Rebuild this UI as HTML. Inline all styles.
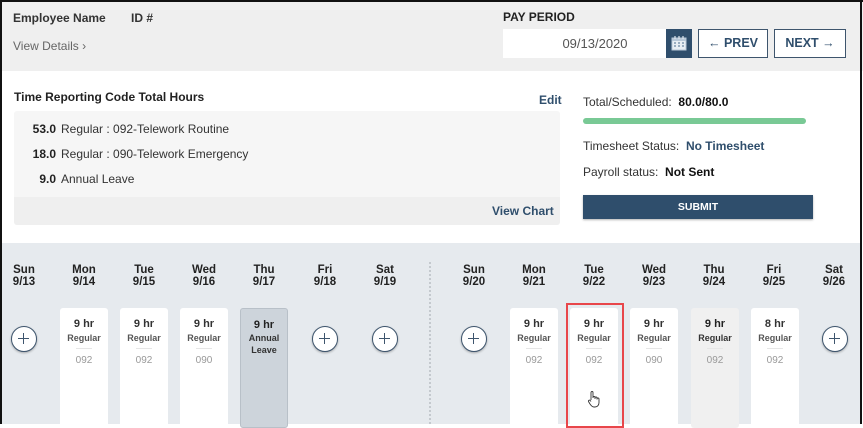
<!DOCTYPE html>
<html><head><meta charset="utf-8"><style>
*{margin:0;padding:0;box-sizing:border-box}
body{width:863px;height:424px;overflow:hidden;font-family:"Liberation Sans",sans-serif;background:#fff;position:relative;color:#222}
.a{position:absolute;white-space:nowrap}
.b{font-weight:bold}
.day{position:absolute;top:264px;width:50px;text-align:center;font-weight:bold;font-size:11.5px;line-height:12px;color:#222}
.card{position:absolute;top:308px;width:48px;height:120px;background:#fff;border-radius:3px;text-align:center}
.card .h{margin-top:10px;font-size:11px;font-weight:bold;color:#333}
.card .r{font-size:9px;font-weight:bold;color:#555;margin-top:3px}
.card .l{width:16px;height:1px;background:#e6e6e6;margin:5px auto 6px}
.card .c{font-size:10px;color:#999}
.plus{position:absolute;top:326px;width:26px;height:26px;border-radius:50%;background:#fff;border:1.5px solid #3e556d;box-shadow:0 1px 2px rgba(0,0,0,.3)}
.plus:before{content:"";position:absolute;left:6px;top:11px;width:11px;height:1.3px;background:#3e556d}
.plus:after{content:"";position:absolute;left:11px;top:6px;width:1.3px;height:11px;background:#3e556d}
</style></head><body>
<div class="a" style="left:0;top:0;width:863px;height:71px;background:#efefef"></div>
<div class="a" style="left:0;top:0;width:863px;height:2px;background:#111"></div>
<div class="a" style="left:0;top:0;width:2px;height:424px;background:#111"></div>
<div class="a" style="left:860px;top:0;width:2px;height:424px;background:#111"></div>
<div class="a b" style="left:13px;top:11px;font-size:12px;color:#333">Employee Name</div>
<div class="a b" style="left:131px;top:11px;font-size:12px;color:#333">ID #</div>
<div class="a" style="left:13px;top:39px;font-size:12px;color:#666">View Details &#x203A;</div>
<div class="a b" style="left:503px;top:10px;font-size:12px;color:#222">PAY PERIOD</div>
<div class="a" style="left:503px;top:29px;width:164px;height:29px;background:#fff;font-size:13px;color:#555;text-align:center;line-height:29px;padding-left:20px">09/13/2020</div>
<div class="a" style="left:666px;top:29px;width:26px;height:29px;background:#2f4e6c"></div>
<svg class="a" style="left:671px;top:36px" width="16" height="15" viewBox="0 0 16 15"><rect x="1" y="2" width="14" height="12" fill="#e8eef4" stroke="#b8c8d8"/><rect x="1" y="2" width="14" height="3" fill="#b8c8d8"/><path d="M4 0v3M8 0v3M12 0v3" stroke="#dfe7ef" stroke-width="1.2"/><path d="M3 7h2M7 7h2M11 7h2M3 10h2M7 10h2M11 10h2" stroke="#7f97ae" stroke-width="1.5"/></svg>
<div class="a" style="left:698px;top:29px;width:70px;height:29px;background:#fff;border:1px solid #3e556d;font-size:12.5px;font-weight:bold;color:#2f4e6c;line-height:27px;text-align:center">&#8592; PREV</div>
<div class="a" style="left:774px;top:29px;width:72px;height:29px;background:#fff;border:1px solid #3e556d;font-size:12.5px;font-weight:bold;color:#2f4e6c;line-height:27px;text-align:center">NEXT &#8594;</div>

<div class="a b" style="left:14px;top:90px;font-size:12px">Time Reporting Code Total Hours</div>
<div class="a b" style="left:539px;top:93px;font-size:12px;color:#2f4e6c">Edit</div>
<div class="a" style="left:14px;top:111px;width:546px;height:114px;background:#f6f6f6;border-radius:3px"></div>
<div class="a" style="left:14px;top:197px;width:546px;height:28px;background:#efefef;border-radius:0 0 3px 3px"></div>
<div class="a" style="left:0;top:122px;width:56px;text-align:right;font-size:12px;font-weight:bold">53.0</div>
<div class="a" style="left:61px;top:122px;font-size:12px;color:#333">Regular : 092-Telework Routine</div>
<div class="a" style="left:0;top:147px;width:56px;text-align:right;font-size:12px;font-weight:bold">18.0</div>
<div class="a" style="left:61px;top:147px;font-size:12px;color:#333">Regular : 090-Telework Emergency</div>
<div class="a" style="left:0;top:172px;width:56px;text-align:right;font-size:12px;font-weight:bold">9.0</div>
<div class="a" style="left:61px;top:172px;font-size:12px;color:#333">Annual Leave</div>
<div class="a b" style="left:492px;top:204px;font-size:12px;color:#2f4e6c">View Chart</div>

<div class="a" style="left:583px;top:95px;font-size:12px;color:#333">Total/Scheduled: &nbsp;<b style="color:#111">80.0/80.0</b></div>
<div class="a" style="left:583px;top:118px;width:223px;height:6px;background:#79c995;border-radius:3px"></div>
<div class="a" style="left:583px;top:139px;font-size:12px;color:#333">Timesheet Status: &nbsp;<b style="color:#2f4e6c">No Timesheet</b></div>
<div class="a" style="left:583px;top:165px;font-size:12px;color:#333">Payroll status: &nbsp;<b style="color:#111">Not Sent</b></div>
<div class="a b" style="left:583px;top:195px;width:230px;height:24px;background:#2f4e6c;color:#fff;font-size:10.5px;text-align:center;line-height:24px;box-shadow:0 1px 2px rgba(0,0,0,.3)">SUBMIT</div>

<div class="a" style="left:2px;top:243px;width:858px;height:181px;background:#e6eaee"></div>
<div class="a" style="left:429px;top:262px;width:0;height:162px;border-left:2px dotted #c4c9ce"></div>

<div class="day" style="left:-1px">Sun<br>9/13</div>
<div class="day" style="left:59px">Mon<br>9/14</div>
<div class="day" style="left:119px">Tue<br>9/15</div>
<div class="day" style="left:179px">Wed<br>9/16</div>
<div class="day" style="left:239px">Thu<br>9/17</div>
<div class="day" style="left:300px">Fri<br>9/18</div>
<div class="day" style="left:360px">Sat<br>9/19</div>
<div class="day" style="left:449px">Sun<br>9/20</div>
<div class="day" style="left:509px">Mon<br>9/21</div>
<div class="day" style="left:569px">Tue<br>9/22</div>
<div class="day" style="left:629px">Wed<br>9/23</div>
<div class="day" style="left:689px">Thu<br>9/24</div>
<div class="day" style="left:749px">Fri<br>9/25</div>
<div class="day" style="left:809px">Sat<br>9/26</div>

<div class="plus" style="left:11px"></div>
<div class="card" style="left:60px"><div class="h">9 hr</div><div class="r">Regular</div><div class="l"></div><div class="c">092</div></div>
<div class="card" style="left:120px"><div class="h">9 hr</div><div class="r">Regular</div><div class="l"></div><div class="c">092</div></div>
<div class="card" style="left:180px"><div class="h">9 hr</div><div class="r">Regular</div><div class="l"></div><div class="c">090</div></div>
<div class="card" style="left:240px;background:#cdd4db;border:1px solid #b8c0c8"><div class="h" style="color:#222">9 hr</div><div class="r" style="color:#333;line-height:12px;margin-top:1px">Annual<br>Leave</div></div>
<div class="plus" style="left:312px"></div>
<div class="plus" style="left:372px"></div>
<div class="plus" style="left:461px"></div>
<div class="card" style="left:510px"><div class="h">9 hr</div><div class="r">Regular</div><div class="l"></div><div class="c">092</div></div>
<div class="card" style="left:570px"><div class="h">9 hr</div><div class="r">Regular</div><div class="l"></div><div class="c">092</div></div>
<div class="card" style="left:630px"><div class="h">9 hr</div><div class="r">Regular</div><div class="l"></div><div class="c">090</div></div>
<div class="card" style="left:691px;background:#f0f0f0"><div class="h" style="color:#222">9 hr</div><div class="r" style="color:#333">Regular</div><div class="l"></div><div class="c">092</div></div>
<div class="card" style="left:751px"><div class="h">8 hr</div><div class="r">Regular</div><div class="l"></div><div class="c">092</div></div>
<div class="plus" style="left:822px"></div>
<div class="a" style="left:566px;top:303px;width:58px;height:125px;border:2px solid #e8464a"></div>
<svg class="a" style="left:587px;top:390px" width="14" height="18" viewBox="0 0 14 18"><path d="M4 10V2.5a1 1 0 0 1 2 0V8M6 7.5a1 1 0 0 1 2 0V9M8 8a1 1 0 0 1 2 0v1.5M10 9a1 1 0 0 1 2 0v3.5c0 2.5-1.5 4.5-4 4.5H7c-2 0-3-1.5-4-3L1.5 11.5a1 1 0 0 1 1.7-1L4 11.5" fill="#fff" stroke="#333" stroke-width="0.9"/></svg>
</body></html>
